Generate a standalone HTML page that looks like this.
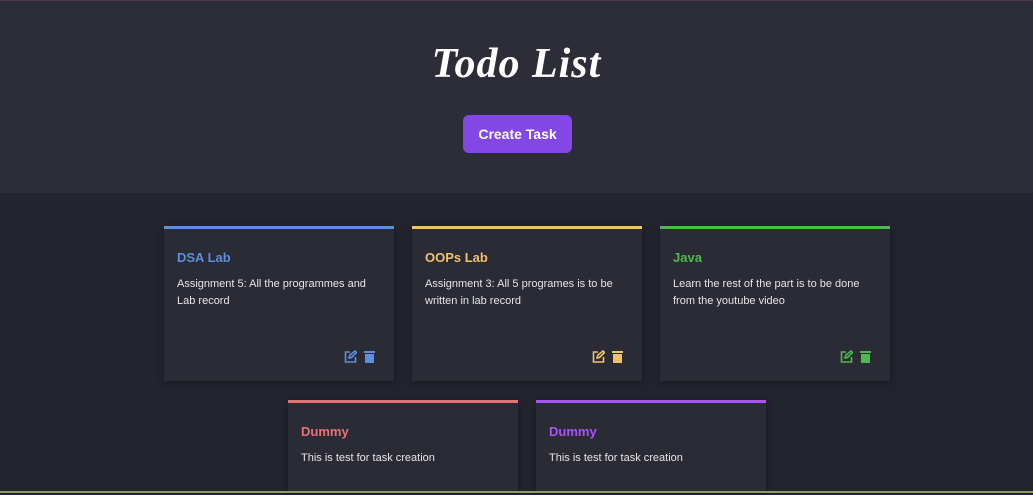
<!DOCTYPE html>
<html><head><style>
*{margin:0;padding:0;box-sizing:border-box}
html,body{width:1033px;height:495px;overflow:hidden}
body{background:#23242e;font-family:"Liberation Sans",sans-serif;position:relative}
.top{position:absolute;left:0;top:0;width:1033px;height:193px;background:#2c2d38;border-top:1px solid #4a3a4a}
h1{position:absolute;left:0;width:100%;top:40px;text-align:center;color:#fff;font-family:"Liberation Serif",serif;font-style:italic;font-weight:bold;font-size:42px;letter-spacing:1px}
.btn{position:absolute;left:463px;top:115px;width:109px;height:38px;background:#8247e5;border-radius:6px;color:#fff;font-size:14px;font-weight:bold;text-align:center;line-height:38px}
.card{position:absolute;width:230px;height:155px;background:#2a2b35;border-top:3px solid;box-shadow:0 2px 8px rgba(0,0,0,.35)}
.card h3{position:absolute;left:13px;top:21px;font-size:13px;font-weight:bold}
.card p{position:absolute;left:13px;top:47px;width:205px;font-size:11px;line-height:17px;color:#e6e6e6}
.ic{position:absolute;top:121px;left:180px;display:flex;gap:7px}
.bot{position:absolute;left:0;top:491px;width:1033px;height:2px;background:#8a9a6a;z-index:5}
</style></head><body>
<div class="top"></div>
<h1>Todo List</h1>
<div class="btn">Create Task</div>

<div class="card" style="left:164px;top:226px;border-color:#5b8fe0"><h3 style="color:#5b8fe0">DSA Lab</h3><p>Assignment 5: All the programmes and Lab record</p><div class="ic"><svg width="13" height="13" viewBox="0 0 13 13" fill="none" stroke="#5b8fe0" stroke-width="1.6"><path d="M6 2H1.5v10h10V7"/><path d="M5 8l1-3 5-4 1.5 1.5-5 5z"/></svg><svg width="11" height="13" viewBox="0 0 11 13"><rect x="0" y="1" width="11" height="2" fill="#5b8fe0"/><rect x="1" y="4" width="9" height="9" fill="#5b8fe0"/></svg></div></div>

<div class="card" style="left:412px;top:226px;border-color:#f0c070"><h3 style="color:#f0c070">OOPs Lab</h3><p>Assignment 3: All 5 programes is to be written in lab record</p><div class="ic"><svg width="13" height="13" viewBox="0 0 13 13" fill="none" stroke="#f0c070" stroke-width="1.6"><path d="M6 2H1.5v10h10V7"/><path d="M5 8l1-3 5-4 1.5 1.5-5 5z"/></svg><svg width="11" height="13" viewBox="0 0 11 13"><rect x="0" y="1" width="11" height="2" fill="#f0c070"/><rect x="1" y="4" width="9" height="9" fill="#f0c070"/></svg></div></div>

<div class="card" style="left:660px;top:226px;border-color:#4cba4c"><h3 style="color:#4cba4c">Java</h3><p>Learn the rest of the part is to be done from the youtube video</p><div class="ic"><svg width="13" height="13" viewBox="0 0 13 13" fill="none" stroke="#4cba4c" stroke-width="1.6"><path d="M6 2H1.5v10h10V7"/><path d="M5 8l1-3 5-4 1.5 1.5-5 5z"/></svg><svg width="11" height="13" viewBox="0 0 11 13"><rect x="0" y="1" width="11" height="2" fill="#4cba4c"/><rect x="1" y="4" width="9" height="9" fill="#4cba4c"/></svg></div></div>

<div class="card" style="left:288px;top:400px;height:91px;border-color:#e57373"><h3 style="color:#e57373">Dummy</h3><p>This is test for task creation</p></div>
<div class="card" style="left:536px;top:400px;height:91px;border-color:#a855f7"><h3 style="color:#a855f7">Dummy</h3><p>This is test for task creation</p></div>
<div class="bot"></div>
</body></html>
